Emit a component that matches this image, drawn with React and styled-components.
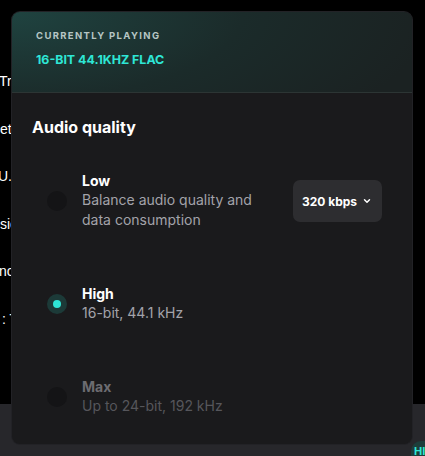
import React from 'react'
import styled, { createGlobalStyle } from 'styled-components'

const GlobalStyle = createGlobalStyle`
  html, body { margin: 0; padding: 0; background: #000; }
  body { font-family: Inter, "Noto Sans", sans-serif; }
`

const backdropLines = [
  { text: 'Tricky', shift: -1 },
  { text: 'etting', shift: 0 },
  { text: 'U.S.A', shift: -2 },
  { text: 'sic', shift: 0 },
  { text: 'nce', shift: -1 },
  { text: ': The', shift: 2 },
]

const options = [
  { id: 'low', title: 'Low', desc: 'Balance audio quality and data consumption', bitrate: '320 kbps' },
  { id: 'high', title: 'High', desc: '16-bit, 44.1 kHz' },
  { id: 'max', title: 'Max', desc: 'Up to 24-bit, 192 kHz', disabled: true },
]

function Chevron() {
  return (
    <svg width="10" height="10" viewBox="0 0 24 24" fill="none" stroke="currentColor" strokeWidth="3.5" strokeLinecap="round" strokeLinejoin="round">
      <path d="M6 9l6 6 6-6" />
    </svg>
  )
}

function App() {
  const selected = 'high'
  return (
    <>
      <GlobalStyle />
      <Page>
        <Backdrop>
          {backdropLines.map((l) => (
            <BackLine key={l.text} $shift={l.shift}>{l.text}</BackLine>
          ))}
        </Backdrop>
        <BottomBar>
          <Badge>HI</Badge>
        </BottomBar>

        <Panel>
          <Header>
            <Eyebrow>Currently playing</Eyebrow>
            <Format>16-BIT 44.1KHZ FLAC</Format>
          </Header>
          <Body>
            <Title>Audio quality</Title>
            <Options>
              {options.map((o) => (
                <Option key={o.id}>
                  <Radio $on={selected === o.id} />
                  <OptionText>
                    <OptionTitle $disabled={o.disabled}>{o.title}</OptionTitle>
                    <OptionDesc $disabled={o.disabled}>{o.desc}</OptionDesc>
                  </OptionText>
                  {o.bitrate && (
                    <Dropdown>
                      {o.bitrate}
                      <Chevron />
                    </Dropdown>
                  )}
                </Option>
              ))}
            </Options>
          </Body>
        </Panel>
      </Page>
    </>
  )
}

const Page = styled.div`
  position: relative;
  width: 425px;
  height: 456px;
  overflow: hidden;
  background: #000;
  display: flex;
  flex-direction: column;
`
const Backdrop = styled.div`
  flex: 1;
  display: flex;
  flex-direction: column;
  gap: 29.6px;
  padding-top: 72px;
`
const BackLine = styled.div`
  margin-left: ${(p) => p.$shift}px;
  color: #fff;
  font-family: "Liberation Sans", Arial, sans-serif;
  font-size: 14px;
  line-height: 18px;
  white-space: nowrap;
`
const BottomBar = styled.div`
  height: 52px;
  background: #27272b;
  display: flex;
  justify-content: flex-end;
  align-items: flex-end;
`
const Badge = styled.div`
  width: 30px;
  height: 15px;
  margin-right: -19px;
  padding-left: 3px;
  border-radius: 10px 0 0 0;
  background: #1d3e3b;
  color: #2ee6d6;
  font-size: 11px;
  font-weight: 700;
  line-height: 20px;
`
const Panel = styled.div`
  position: absolute;
  top: 12px;
  left: 12px;
  width: 400px;
  height: 432px;
  border-radius: 8px;
  background: #1a1a1c;
  overflow: hidden;
  box-shadow: 0 0 0 1px #222226;
`
const Header = styled.div`
  height: 81px;
  padding: 17px 24px 0;
  box-sizing: border-box;
  border-bottom: 1px solid #2c3534;
  background: radial-gradient(ellipse 420px 160px at 0% 0%, #1f4340 0%, #1b2b2a 55%, #1b2222 100%);
`
const Eyebrow = styled.div`
  color: #b6c6c4;
  font-size: 9.5px;
  font-weight: 700;
  letter-spacing: 1.35px;
  text-transform: uppercase;
  line-height: 14px;
`
const Format = styled.div`
  margin-top: 9px;
  color: #2ee6d6;
  font-size: 12.4px;
  font-weight: 700;
  line-height: 16px;
`
const Body = styled.div`
  padding: 24px 30px 0 20px;
`
const Title = styled.div`
  color: #fff;
  font-size: 16px;
  font-weight: 700;
  line-height: 20px;
`
const Options = styled.div`
  display: flex;
  flex-direction: column;
  gap: 55px;
  margin-top: 35px;
  padding-left: 15px;
`
const Option = styled.div`
  display: flex;
  align-items: center;
`
const Radio = styled.div`
  flex: none;
  width: 20px;
  height: 20px;
  border-radius: 50%;
  background: ${(p) => (p.$on ? '#1c3a38' : '#141416')};
  display: flex;
  align-items: center;
  justify-content: center;
  &::after {
    content: '';
    display: ${(p) => (p.$on ? 'block' : 'none')};
    width: 8px;
    height: 8px;
    border-radius: 50%;
    background: #2ee6d6;
  }
`
const OptionText = styled.div`
  flex: 1;
  margin-left: 15px;
  max-width: 190px;
`
const OptionTitle = styled.div`
  color: ${(p) => (p.$disabled ? '#6c6c71' : '#fff')};
  font-size: 14px;
  font-weight: 700;
  line-height: 18px;
`
const OptionDesc = styled.div`
  color: ${(p) => (p.$disabled ? '#56565b' : '#a3a3aa')};
  font-size: 14px;
  line-height: 20px;
`
const Dropdown = styled.div`
  margin-left: auto;
  height: 42px;
  padding: 0 10px 0 9px;
  box-sizing: border-box;
  border-radius: 7px;
  background: #2d2d30;
  color: #fff;
  font-size: 12px;
  font-weight: 700;
  display: flex;
  align-items: center;
  gap: 5px;
`

export default App
